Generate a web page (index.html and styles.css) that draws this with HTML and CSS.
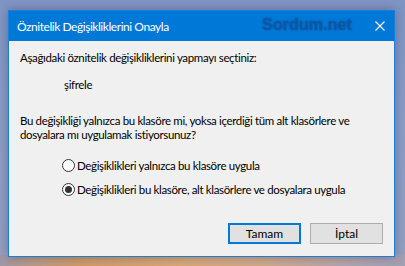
FILE: index.html
```html
<!DOCTYPE html>
<html lang="tr">
<head>
<meta charset="utf-8">
<title>Öznitelik Değişikliklerini Onayla</title>
<link rel="stylesheet" href="styles.css">
</head>
<body>
<div class="desktop">
  <div class="window">
    <div class="titlebar">
      <span class="title">Öznitelik Değişikliklerini Onayla</span>
      <span class="watermark">Sordum.net</span>
      <span class="close">
        <svg width="10" height="10" viewBox="0 0 10 10"><path d="M0.5 0.5 L9.5 9.5 M9.5 0.5 L0.5 9.5" stroke="#fff" stroke-width="1.1" fill="none"/></svg>
      </span>
    </div>
    <div class="content">
      <p class="line first">Aşağıdaki öznitelik değişikliklerini yapmayı seçtiniz:</p>
      <p class="line attr">şifrele</p>
      <p class="question">Bu değişikliği yalnızca bu klasöre mi, yoksa içerdiği tüm alt klasörlere ve dosyalara mı uygulamak istiyorsunuz?</p>
      <div class="options">
        <label class="option"><span class="radio"></span>Değişiklikleri yalnızca bu klasöre uygula</label>
        <label class="option"><span class="radio checked"></span>Değişiklikleri bu klasöre, alt klasörlere ve dosyalara uygula</label>
      </div>
      <div class="buttons">
        <button class="btn default">Tamam</button>
        <button class="btn">İptal</button>
      </div>
    </div>
  </div>
</div>
</body>
</html>
```
FILE: styles.css
```css
html, body {
  margin: 0;
  padding: 0;
}
body {
  width: 405px;
  height: 266px;
  overflow: hidden;
}
.desktop {
  box-sizing: border-box;
  width: 405px;
  height: 266px;
  padding: 10px 0 0 8px;
  background:
    linear-gradient(90deg, #9d98a8 0%, #b89a86 8%, #cf9a66 20%, #d7a878 45%, #cfa88a 65%, #b4a4a8 85%, #a29fb2 100%) bottom / 100% 11px no-repeat,
    linear-gradient(180deg, #7f95c4 0%, #8a9cc6 40%, #929fc2 90%, #9a9fbb 100%);
  font-family: "Segoe UI", Lato, sans-serif;
}
.window {
  box-sizing: border-box;
  width: 387px;
  height: 247px;
  border: 1px solid #1a7fd6;
  background: #f0f0f0;
  box-shadow: 0 0 10px rgba(30, 30, 60, 0.35);
  display: flex;
  flex-direction: column;
}
.titlebar {
  height: 30px;
  background: #0078d7;
  display: flex;
  align-items: center;
  padding-left: 8px;
  color: #fff;
  font-size: 12px;
  letter-spacing: -0.45px;
}
.title {
  flex: 1;
}
.watermark {
  font-family: "Liberation Sans", Arial, sans-serif;
  font-weight: bold;
  font-size: 16px;
  letter-spacing: 0.1px;
  color: #0b58a6;
  text-shadow: 0 0 2px #0a4f98;
  margin-right: 23px;
  margin-top: -2px;
}
.close {
  width: 10px;
  height: 10px;
  margin-right: 9px;
  display: flex;
}
.content {
  flex: 1;
  padding: 9px 11px 0 11px;
  font-size: 11.5px;
  letter-spacing: -0.35px;
  color: #000;
  display: flex;
  flex-direction: column;
}
.line {
  margin: 0;
  line-height: 15px;
}
.attr {
  margin-top: 12px;
  padding-left: 44px;
}
.question {
  margin: 22px 0 0 0;
  line-height: 14px;
  width: 330px;
}
.options {
  display: flex;
  flex-direction: column;
  gap: 9px;
  margin-top: 16px;
  padding-left: 42px;
}
.option {
  display: flex;
  align-items: center;
  line-height: 15px;
}
.radio {
  box-sizing: border-box;
  width: 13px;
  height: 13px;
  border: 1px solid #333;
  border-radius: 50%;
  background: #fff;
  margin-right: 2px;
  display: flex;
  align-items: center;
  justify-content: center;
}
.radio.checked::after {
  content: "";
  width: 7px;
  height: 7px;
  border-radius: 50%;
  background: #333;
}
.buttons {
  display: flex;
  justify-content: flex-end;
  gap: 9px;
  margin-top: auto;
  margin-bottom: 12px;
  padding-right: 0;
}
.btn {
  box-sizing: border-box;
  width: 73px;
  height: 21px;
  font-family: inherit;
  font-size: 12px;
  letter-spacing: 0;
  background: #e1e1e1;
  border: 1px solid #adadad;
  color: #000;
  padding: 0;
}
.btn.default {
  border: 2px solid #0078d7;
}
```
